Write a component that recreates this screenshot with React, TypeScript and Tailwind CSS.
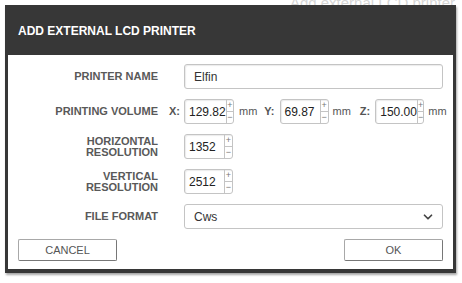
import { ChevronDown } from "lucide-react";

const FONT = { fontFamily: '"Liberation Sans", Arial, sans-serif' };

function Label({ children }: { children: React.ReactNode }) {
  return (
    <div className="flex w-[140px] shrink-0 items-center justify-end text-right text-[11px] font-bold uppercase leading-[11px] text-[#595959]">
      {children}
    </div>
  );
}

function NumberBox({ value, width }: { value: string; width: string }) {
  return (
    <div className={`flex h-[25px] ${width} shrink-0 rounded-[3px] border border-[#c4c4c4] bg-white shadow-[inset_1px_1px_1px_rgba(0,0,0,0.08)]`}>
      <div className="flex flex-1 items-center pl-[4px] text-[12px] text-[#222]">{value}</div>
      <div className="flex w-[8px] flex-col border-l border-[#c4c4c4] text-[#777]">
        <span className="flex flex-1 items-center justify-center text-[9px] leading-none">+</span>
        <span className="flex flex-1 items-center justify-center border-t border-[#c4c4c4] text-[9px] leading-none">−</span>
      </div>
    </div>
  );
}

function Unit({ children, className = "" }: { children: React.ReactNode; className?: string }) {
  return <span className={`text-[11px] text-[#555] ${className}`}>{children}</span>;
}

function Axis({ children, className = "" }: { children: React.ReactNode; className?: string }) {
  return <span className={`text-[11px] font-bold text-[#555] ${className}`}>{children}</span>;
}

export default function App() {
  return (
    <div className="relative h-[283px] w-[462px] overflow-hidden bg-white" style={FONT}>
      <div className="-mt-[6px] pr-[7px] text-right text-[15px] leading-[17px] text-[#d6d6d6]">Add external LCD printer</div>

      <div className="absolute left-[5px] top-[5px] flex w-[451px] flex-col bg-[#373737] shadow-[1px_2px_2px_rgba(0,0,0,0.35)]">
        <div className="flex h-[50px] items-center pl-[13px] pt-[2px] text-[12px] font-bold text-white">
          ADD EXTERNAL LCD PRINTER
        </div>

        <div className="mx-[3px] mb-[4px] flex flex-col gap-[10px] bg-white px-[10px] pb-[8px] pt-[9px]">
          <div className="flex h-[25px]">
            <Label>Printer name</Label>
            <div className="w-[26px] shrink-0" />
            <div className="flex flex-1 items-center rounded-[3px] border border-[#c4c4c4] pl-[9px] text-[12px] text-[#333] shadow-[inset_1px_1px_1px_rgba(0,0,0,0.08)]">
              Elfin
            </div>
          </div>

          <div className="flex h-[25px] items-center">
            <Label>Printing volume</Label>
            <div className="flex w-[26px] shrink-0 justify-end pr-[4px]">
              <Axis>X:</Axis>
            </div>
            <NumberBox value="129.82" width="w-[50px]" />
            <Unit className="ml-[5px]">mm</Unit>
            <Axis className="ml-[7px]">Y:</Axis>
            <div className="ml-[5px]">
              <NumberBox value="69.87" width="w-[49px]" />
            </div>
            <Unit className="ml-[4px]">mm</Unit>
            <Axis className="ml-[9px]">Z:</Axis>
            <div className="ml-[5px]">
              <NumberBox value="150.00" width="w-[49px]" />
            </div>
            <Unit className="ml-[4px]">mm</Unit>
          </div>

          <div className="flex h-[25px]">
            <Label>
              Horizontal
              <br />
              resolution
            </Label>
            <div className="w-[26px] shrink-0" />
            <NumberBox value="1352" width="w-[49px]" />
          </div>

          <div className="flex h-[25px]">
            <Label>
              Vertical
              <br />
              resolution
            </Label>
            <div className="w-[26px] shrink-0" />
            <NumberBox value="2512" width="w-[49px]" />
          </div>

          <div className="flex h-[25px]">
            <Label>File format</Label>
            <div className="w-[26px] shrink-0" />
            <div className="flex flex-1 items-center justify-between rounded-[3px] border border-[#c4c4c4] pl-[9px] pr-[7px] text-[12px] text-[#333]">
              Cws
              <ChevronDown size={14} strokeWidth={3} className="text-[#444]" />
            </div>
          </div>

          <div className="flex h-[22px] justify-between">
            <button
              type="button"
              className="w-[99px] rounded-[2px] border border-[#a8a8a8] border-b-[#777] border-r-[#777] text-[11px] text-[#555]"
            >
              CANCEL
            </button>
            <button
              type="button"
              className="w-[99px] rounded-[2px] border border-[#a8a8a8] border-b-[#777] border-r-[#777] text-[11px] text-[#555]"
            >
              OK
            </button>
          </div>
        </div>
      </div>
    </div>
  );
}
